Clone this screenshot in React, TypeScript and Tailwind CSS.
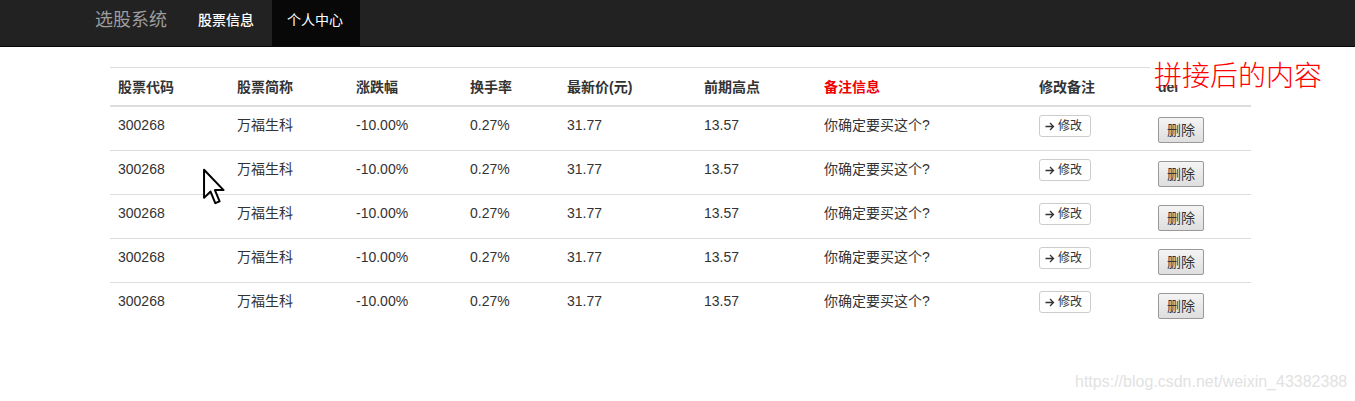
import React from 'react';

const columnas = [
  { titulo: '股票代码', ancho: 'w-[119px]' },
  { titulo: '股票简称', ancho: 'w-[119px]' },
  { titulo: '涨跌幅', ancho: 'w-[114px]' },
  { titulo: '换手率', ancho: 'w-[97px]' },
  { titulo: '最新价(元)', ancho: 'w-[137px]' },
  { titulo: '前期高点', ancho: 'w-[120px]' },
  { titulo: '备注信息', ancho: 'w-[215px]', rojo: true },
  { titulo: '修改备注', ancho: 'w-[119px]' },
  { titulo: 'del', ancho: 'w-[101px]' },
];

const filas = Array.from({ length: 5 }, (_, i) => ({
  id: i,
  codigo: '300268',
  nombre: '万福生科',
  cambio: '-10.00%',
  rotacion: '0.27%',
  precio: '31.77',
  maximo: '13.57',
  nota: '你确定要买这个?',
}));

function Cursor() {
  return (
    <svg
      className="absolute left-[202px] top-[168px]"
      width="24"
      height="38"
      viewBox="0 0 13 21"
    >
      <polygon
        points="1,1 1,16.5 4.6,13 7.2,19.4 9.6,18.4 7,12.2 11.8,12.2"
        fill="#fff"
        stroke="#000"
        strokeWidth="1.1"
        strokeLinejoin="round"
      />
    </svg>
  );
}

function Flecha() {
  return (
    <svg width="10" height="9" viewBox="0 0 10 9" className="shrink-0">
      <path d="M0.5 4.5H8.5M5 1L8.5 4.5L5 8" fill="none" stroke="#333" strokeWidth="1.3" />
    </svg>
  );
}

export default function App() {
  return (
    <div className="relative w-[1355px] h-[401px] bg-white font-['Liberation_Sans','Noto_Sans_CJK_SC',sans-serif] text-[14px] text-[#333]">
      {/* Barra superior */}
      <nav className="h-[47px] bg-[#222] border-b border-[#080808] flex items-stretch">
        <div className="pl-[95px] pr-[16px] pb-[6px] flex items-center text-[18px] text-[#9d9d9d]">
          选股系统
        </div>
        <a className="px-[15px] pb-[6px] flex items-center text-white font-medium w-[89px]">股票信息</a>
        <a className="px-[15px] pb-[6px] flex items-center text-white bg-[#080808] w-[88px]">个人中心</a>
      </nav>

      {/* Tabla */}
      <div className="pt-[20px] pl-[110px]">
        <table className="w-[1141px] border-collapse table-fixed">
          <thead>
            <tr className="border-t border-[#ddd] border-b-2">
              {columnas.map((c) => (
                <th
                  key={c.titulo}
                  className={`${c.ancho} px-[8px] pt-[9px] pb-[8px] leading-[20px] text-left font-bold align-bottom ${
                    c.rojo ? 'text-[#e00]' : 'text-[#333]'
                  }`}
                >
                  {c.titulo}
                </th>
              ))}
            </tr>
          </thead>
          <tbody>
            {filas.map((f, i) => (
              <tr key={f.id} className={i > 0 ? 'border-t border-[#ddd]' : ''}>
                <td className="p-[8px] leading-[20px] align-top">{f.codigo}</td>
                <td className="p-[8px] leading-[20px] align-top">{f.nombre}</td>
                <td className="p-[8px] leading-[20px] align-top">{f.cambio}</td>
                <td className="p-[8px] leading-[20px] align-top">{f.rotacion}</td>
                <td className="p-[8px] leading-[20px] align-top">{f.precio}</td>
                <td className="p-[8px] leading-[20px] align-top">{f.maximo}</td>
                <td className="p-[8px] leading-[20px] align-top">{f.nota}</td>
                <td className="p-[8px] leading-[20px] align-top">
                  <button className="h-[22px] w-[52px] px-[5px] flex items-center gap-[3px] text-[12px] text-[#333] bg-white border border-[#ccc] rounded-[3px]">
                    <Flecha />修改
                  </button>
                </td>
                <td className="pt-[10px] px-[8px] pb-[7px] leading-[20px] align-top">
                  <button className="h-[26px] w-[46px] flex items-center justify-center text-[14px] text-[#333] bg-gradient-to-b from-[#f4f4f4] to-[#dedede] border border-[#999] rounded-[2px]">
                    删除
                  </button>
                </td>
              </tr>
            ))}
          </tbody>
        </table>
      </div>

      {/* Imagen pegada encima */}
      <div className="absolute left-[1150px] top-[55px] w-[180px] h-[30px] bg-white">
        <span className="absolute left-[4px] top-[-1px] whitespace-nowrap text-[28px] leading-[40px] text-[#ff0000] font-['Noto_Sans_CJK_SC',sans-serif] font-light">
          拼接后的内容
        </span>
      </div>

      <Cursor />

      <div className="absolute left-[1075px] top-[370px] text-[16px] text-[#e2e2e2] font-['Liberation_Sans',sans-serif]">
        https://blog.csdn.net/weixin_43382388
      </div>
    </div>
  );
}
